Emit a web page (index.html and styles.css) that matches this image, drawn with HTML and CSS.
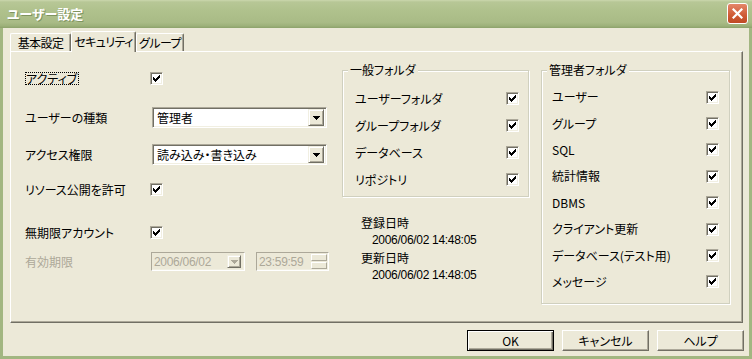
FILE: index.html
```html
<!DOCTYPE html>
<html lang="ja">
<head>
    <meta charset="UTF-8">
    <meta name="viewport" content="width=device-width, initial-scale=1.0">
    <title>ユーザー設定</title>
    <link rel="stylesheet" href="styles.css">
</head>
<body>
<!-- shared glyphs: checkbox tick and combo arrow -->
<svg class="defs" width="0" height="0">
    <symbol id="chk" viewBox="0 0 7 7"><path d="M0 2h1v3H0zM1 3h1v3H1zM2 4h1v3H2zM3 3h1v3H3zM4 2h1v3H4zM5 1h1v3H5zM6 0h1v3H6z"/></symbol>
    <symbol id="tri" viewBox="0 0 7 4"><path d="M0 0h7v1H6v1H5v1H4v1H3V3H2V2H1V1H0z"/></symbol>
</svg>

<div class="window">
    <div class="titlebar">
        <span class="title">ユーザー設定</span>
        <span class="close-btn">
            <svg width="11" height="11" viewBox="0 0 11 11"><path d="M1.5 1.5L9.5 9.5M9.5 1.5L1.5 9.5" stroke="#fff" stroke-width="2.2" stroke-linecap="square"/></svg>
        </span>
    </div>

    <div class="client">
        <div class="tabs">
            <div class="tab tab-basic">基本設定</div>
            <div class="tab tab-security active">セキュリティ</div>
            <div class="tab tab-group">グループ</div>
        </div>

        <div class="panel">
            <div class="form-col">
                <div class="field f-active">
                    <span class="field-label"><span class="focus">アクティブ</span></span>
                    <span class="check"><svg><use href="#chk"/></svg></span>
                </div>
                <div class="field f-type">
                    <span class="field-label">ユーザーの種類</span>
                    <div class="combo"><span class="combo-text">管理者</span><span class="combo-btn"><svg><use href="#tri"/></svg></span></div>
                </div>
                <div class="field f-access">
                    <span class="field-label">アクセス権限</span>
                    <div class="combo"><span class="combo-text">読み込み・書き込み</span><span class="combo-btn"><svg><use href="#tri"/></svg></span></div>
                </div>
                <div class="field f-share">
                    <span class="field-label">リソース公開を許可</span>
                    <span class="check"><svg><use href="#chk"/></svg></span>
                </div>
                <div class="field f-unlimited">
                    <span class="field-label">無期限アカウント</span>
                    <span class="check"><svg><use href="#chk"/></svg></span>
                </div>
                <div class="field f-expire disabled">
                    <span class="field-label">有効期限</span>
                    <div class="datebox"><span class="box-text">2006/06/02</span><span class="mini-btn"><svg><use href="#tri"/></svg></span></div>
                    <div class="timebox"><span class="box-text">23:59:59</span><span class="spin"><span></span><span></span></span></div>
                </div>
            </div>

            <div class="mid-col">
                <fieldset class="group group-general">
                    <legend>一般フォルダ</legend>
                    <div class="group-row"><span>ユーザーフォルダ</span><span class="check"><svg><use href="#chk"/></svg></span></div>
                    <div class="group-row"><span>グループフォルダ</span><span class="check"><svg><use href="#chk"/></svg></span></div>
                    <div class="group-row"><span>データベース</span><span class="check"><svg><use href="#chk"/></svg></span></div>
                    <div class="group-row"><span>リポジトリ</span><span class="check"><svg><use href="#chk"/></svg></span></div>
                </fieldset>

                <dl class="stamps">
                    <dt>登録日時</dt>
                    <dd>2006/06/02 14:48:05</dd>
                    <dt>更新日時</dt>
                    <dd>2006/06/02 14:48:05</dd>
                </dl>
            </div>

            <fieldset class="group group-admin">
                <legend>管理者フォルダ</legend>
                <div class="group-row"><span>ユーザー</span><span class="check"><svg><use href="#chk"/></svg></span></div>
                <div class="group-row"><span>グループ</span><span class="check"><svg><use href="#chk"/></svg></span></div>
                <div class="group-row"><span>SQL</span><span class="check"><svg><use href="#chk"/></svg></span></div>
                <div class="group-row"><span>統計情報</span><span class="check"><svg><use href="#chk"/></svg></span></div>
                <div class="group-row"><span>DBMS</span><span class="check"><svg><use href="#chk"/></svg></span></div>
                <div class="group-row"><span>クライアント更新</span><span class="check"><svg><use href="#chk"/></svg></span></div>
                <div class="group-row"><span>データベース(テスト用)</span><span class="check"><svg><use href="#chk"/></svg></span></div>
                <div class="group-row"><span>メッセージ</span><span class="check"><svg><use href="#chk"/></svg></span></div>
            </fieldset>
        </div>

        <div class="buttons">
            <button class="btn default">OK</button>
            <button class="btn">キャンセル</button>
            <button class="btn">ヘルプ</button>
        </div>
    </div>
</div>
</body>
</html>
```

FILE: styles.css
```css
* { box-sizing: border-box; }
body {
    margin: 0; background: #fff; color: #000; white-space: nowrap;
    font: 12px/14px "Noto Sans CJK JP", sans-serif; font-feature-settings: "palt";
}
.defs { position: absolute; width: 0; height: 0; }

/* window frame */
.window { width: 752px; height: 359px; display: flex; flex-direction: column; }
.titlebar {
    height: 28px; flex: none; display: flex; justify-content: space-between; padding: 0 4px 0 7px;
    background: linear-gradient(#cbd7ad 0, #b7c796 2px, #afc18c 40%, #a9bb86 80%, #9db17a 92%, #8ca26b 100%);
}
.title { align-self: center; color: #fff; font-weight: bold; font-size: 13px; line-height: 16px; text-shadow: 1px 1px 0 #7f9460; }
.close-btn {
    width: 21px; height: 21px; margin-top: 3px; display: flex; align-items: center; justify-content: center;
    border: 1px solid #fff; border-radius: 3px; background: linear-gradient(#e4876a, #cf5a34 60%, #bf4a25);
}
.client {
    flex: 1; background: #ece9d8; padding: 3px 5px 0 7px;
    border: 3px solid #a2b681; border-top: 0;
}

/* tabs */
.tabs { display: flex; align-items: flex-end; height: 20px; }
.tab {
    height: 18px; text-align: center; line-height: 17px; background: #ece9d8; letter-spacing: -0.6px;
    border: 1px solid; border-color: #fff #716f64 transparent #fff; border-radius: 2px 2px 0 0;
    border-bottom: 0; box-shadow: inset -1px 0 0 #aca899;
}
.tab-basic { width: 61px; }
.tab-security { width: 65px; }
.tab-group { width: 48px; }
.tab.active { height: 21px; margin-bottom: -1px; position: relative; z-index: 1; line-height: 19px; }

.panel {
    width: 733px; height: 272px; padding: 11px 0 0 14px;
    display: grid; grid-template-columns: 305px 187px 189px; column-gap: 12px; align-items: start;
    border: 1px solid; border-color: #fff #716f64 #716f64 #fff; box-shadow: inset -1px -1px 0 #aca899;
}

/* left form column */
.field { display: flex; align-items: center; }
.field-label { width: 125px; flex: none; }
.f-active { height: 15px; margin-top: 8px; }
.f-type { height: 21px; margin-top: 21px; }
.f-access { height: 21px; margin-top: 16px; }
.f-share { height: 15px; margin-top: 17px; }
.f-unlimited { height: 15px; margin-top: 28px; }
.f-expire { height: 19px; margin-top: 12px; }
.focus { display: inline-block; height: 13px; line-height: 11px; padding: 0 1px 0 0; border: 1px dotted #000; }
.disabled { color: #aca899; }

.check {
    width: 13px; height: 13px; flex: none; display: flex; align-items: center; justify-content: center; background: #fff;
    border: 1px solid; border-color: #aca899 #fff #fff #aca899;
    box-shadow: inset 1px 1px 0 #716f64, inset -1px -1px 0 #f1efe2;
}
.check svg { width: 7px; height: 7px; fill: #000; shape-rendering: crispEdges; }

.combo {
    width: 175px; height: 21px; margin-left: 2px; display: flex; align-items: center; padding: 2px; background: #fff;
    border: 1px solid; border-color: #aca899 #fff #fff #aca899;
    box-shadow: inset 1px 1px 0 #716f64, inset -1px -1px 0 #f1efe2;
}
.combo-text { flex: 1; padding-left: 2px; }
.combo-btn, .mini-btn {
    display: flex; align-items: center; justify-content: center; background: #ece9d8;
    border: 1px solid; border-color: #f1efe2 #716f64 #716f64 #f1efe2; box-shadow: inset 1px 1px 0 #fff, inset -1px -1px 0 #aca899;
}
.combo-btn { width: 16px; height: 17px; }
.combo-btn svg, .mini-btn svg { width: 7px; height: 4px; fill: #000; shape-rendering: crispEdges; }

.datebox, .timebox {
    height: 19px; display: flex; align-items: center; padding: 1px; background: #ece9d8;
    border: 1px solid; border-color: #aca899 #fff #fff #aca899; box-shadow: inset -1px -1px 0 #f1efe2;
}
.datebox { width: 94px; margin-left: 1px; }
.timebox { width: 73px; margin-left: 11px; }
.box-text { flex: 1; padding-left: 1px; font-family: "Liberation Sans", sans-serif; font-size: 12px; letter-spacing: -0.3px; }
.mini-btn { width: 14px; height: 13px; margin-right: 2px; }
.mini-btn svg { fill: #aca899; }
.spin { width: 16px; height: 15px; display: flex; flex-direction: column; gap: 1px; }
.spin span { flex: 1; border: 1px solid; border-color: #fff #aca899 #aca899 #fff; }

/* group boxes */
.group {
    margin: 0; padding: 8px 0 3px; min-width: 0;
    border: 1px solid #d0d0bf; box-shadow: 1px 1px 0 #fff, inset 1px 1px 0 #fff;
}
.group legend { margin-left: 5px; padding: 0 2px; line-height: 14px; background: #ece9d8; }
.group-row { display: flex; align-items: center; justify-content: space-between; }
.group-general .group-row { height: 27px; padding: 0 9px 0 12px; }
.group-admin { padding: 7px 0 8px; }
.group-admin .group-row { height: 26.4px; padding: 0 10px 0 10px; }

.stamps { margin: 17px 0 0; padding-left: 19px; line-height: 17.5px; }
.stamps dt { margin: 0; }
.stamps dd { margin: 0 0 0 11px; font-family: "Liberation Sans", sans-serif; letter-spacing: -0.3px; }

/* dialog buttons */
.buttons { display: flex; justify-content: flex-end; gap: 8px; margin-top: 7px; }
.btn {
    width: 87px; height: 21px; padding: 0; font: inherit; color: #000; background: #ece9d8;
    border: 1px solid; border-color: #fff #716f64 #716f64 #fff; box-shadow: inset -1px -1px 0 #aca899;
}
.btn.default { border-color: #000; box-shadow: inset 1px 1px 0 #fff, inset -1px -1px 0 #716f64, inset -2px -2px 0 #aca899; }
```
